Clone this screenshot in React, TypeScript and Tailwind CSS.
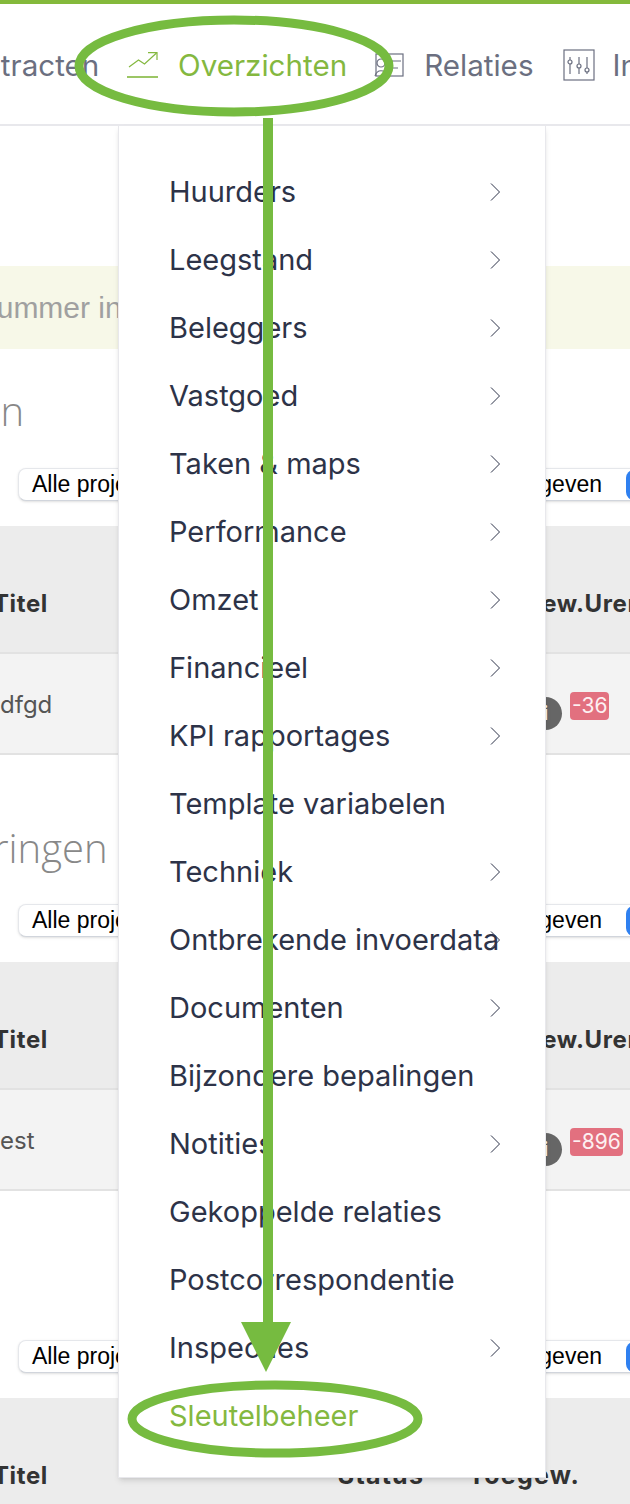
const menuItems = [
  { label: "Huurders", sub: true },
  { label: "Leegstand", sub: true },
  { label: "Beleggers", sub: true },
  { label: "Vastgoed", sub: true },
  { label: "Taken & maps", sub: true },
  { label: "Performance", sub: true },
  { label: "Omzet", sub: true },
  { label: "Financieel", sub: true },
  { label: "KPI rapportages", sub: true },
  { label: "Template variabelen", sub: false },
  { label: "Techniek", sub: true },
  { label: "Ontbrekende invoerdata", sub: true },
  { label: "Documenten", sub: true },
  { label: "Bijzondere bepalingen", sub: false },
  { label: "Notities", sub: true },
  { label: "Gekoppelde relaties", sub: false },
  { label: "Postcorrespondentie", sub: false },
  { label: "Inspecties", sub: true },
];

const FilterRow = () => (
  <div className="h-[33px] flex items-center justify-between pl-[18px] font-['Liberation_Sans',sans-serif] text-[23px] text-black">
    <div className="h-[33px] w-[300px] shrink-0 flex items-center pl-[13px] bg-white rounded-l-lg border border-gray-200 border-b-gray-300 shadow-sm">
      Alle projecten
    </div>
    <div className="h-[33px] flex items-center gap-[24px] -mr-[56px] border-y border-gray-200 border-b-gray-300 shadow-sm">
      <span>Toegegeven</span>
      <span className="w-[60px] h-[30px] shrink-0 rounded-lg bg-[#2f80f0]" />
    </div>
  </div>
);

const TableHeader = ({ full = true }: { full?: boolean }) => (
  <div className="h-[126px] pt-[30px] bg-[#ececec] flex items-center justify-between font-['Inter',sans-serif] font-bold text-[24px] text-[#333] tracking-wide">
    <span className="-ml-[7px]">Titel</span>
    {full ? (
      <span className="-mr-[13px] whitespace-nowrap">Toegew.Uren</span>
    ) : (
      <span className="flex gap-[44px] mr-[50px] text-[25px] tracking-wider">
        <span>Status</span>
        <span>Toegew.</span>
      </span>
    )}
  </div>
);

const TableRow = ({ title, hours }: { title: string; hours: string }) => (
  <div className="h-[103px] bg-[#f3f3f3] border-t-2 border-b-2 border-[#e2e2e2] flex items-center justify-between font-['Inter',sans-serif] text-[24px] text-[#555]">
    <span className="pt-[3px]">{title}</span>
    <div className="w-[101px] shrink-0 flex items-start gap-[8px] pt-[14px]">
      <span className="w-[33px] h-[33px] shrink-0 mt-[5px] rounded-full bg-[#666] text-white font-bold text-[20px] flex items-center justify-center">
        i
      </span>
      <span className="h-[28px] px-[2px] rounded bg-[#e2707f] text-[#fdf0f2] text-[21px] leading-[28px]">
        {hours}
      </span>
    </div>
  </div>
);

const Chevron = () => (
  <svg className="absolute left-[321px] top-[25px]" width="10" height="18" viewBox="0 0 10 18" fill="none" stroke="#2d3348" strokeWidth="1">
    <path d="M1 0.5 L9.5 9 L1 17.5" />
  </svg>
);

const Annotations = () => (
  <svg className="absolute inset-0 pointer-events-none" width="630" height="1504" viewBox="0 0 630 1504" fill="none">
    <ellipse cx="234" cy="66" rx="155" ry="46" stroke="#76bb40" strokeWidth="9" />
    <ellipse cx="275" cy="1419" rx="143" ry="34" stroke="#76bb40" strokeWidth="9" />
    <rect x="263" y="118" width="10" height="1210" fill="#76bb40" />
    <polygon points="241,1322 291,1322 266,1372" fill="#76bb40" />
  </svg>
);

export default function App() {
  return (
    <div className="relative w-[630px] h-[1504px] overflow-hidden bg-white font-['Inter',sans-serif]">
      <div className="h-[4px] bg-[#84b93b]" />

      {/* nav */}
      <div className="h-[122px] pt-[2px] border-b-2 border-[#e8e8ec] flex items-center -ml-[56px] text-[29.6px] text-[#6b6f80] whitespace-nowrap">
        <span className="w-[155px] shrink-0 text-right">Contracten</span>
        <svg className="ml-[28px] mr-[20px] shrink-0" width="31" height="26" viewBox="0 0 31 26" fill="none" stroke="#84b83f" strokeWidth="1.2">
          <path d="M2 15 L11.5 8 L17.5 12 L29.5 1" />
          <path d="M21 0.7 H30 V8" />
          <path d="M0 25 H31" strokeWidth="1.6" />
        </svg>
        <span className="text-[#84b83f] shrink-0">Overzichten</span>
        <svg className="ml-[27px] mr-[19px] shrink-0" width="31" height="24" viewBox="0 0 31 24" fill="none" stroke="#6b6f80" strokeWidth="1.2">
          <rect x="2" y="1" width="27" height="22" />
          <circle cx="7" cy="10" r="4" />
          <path d="M1 23 C3 16 11 16 13 23" />
          <path d="M16 8 H27 M16 15 H24" />
        </svg>
        <span className="shrink-0">Relaties</span>
        <svg className="ml-[29px] mr-[18px] shrink-0" width="32" height="32" viewBox="0 0 32 32" fill="none" stroke="#6b6f80" strokeWidth="1.2">
          <rect x="1" y="1" width="30" height="30" />
          <path d="M7 8 V25 M16 8 V25 M24 8 V25" />
          <circle cx="7" cy="13" r="2" fill="#fff" />
          <circle cx="16" cy="17" r="2" fill="#fff" />
          <circle cx="24" cy="21" r="2" fill="#fff" />
        </svg>
        <span className="shrink-0">Instellingen</span>
      </div>

      {/* page behind the menu */}
      <div className="pt-[140px]">
        <div className="h-[83px] bg-[#f7f8e8] flex items-center -ml-[80px] font-['Liberation_Sans',sans-serif] text-[30px] text-[#a0a0a0] whitespace-nowrap">
          Huisnummer invoeren
        </div>

        <h2 className="h-[119px] pt-[4px] flex items-center justify-end w-[24px] font-['Open_Sans',sans-serif] font-light text-[40px] text-[#888] whitespace-nowrap">
          n
        </h2>
        <FilterRow />
        <div className="h-[25px]" />
        <TableHeader />
        <TableRow title="dfgd" hours="-36" />

        <h2 className="h-[149px] flex items-end pb-[26px] -ml-[7px] font-['Open_Sans',sans-serif] font-light text-[40px] text-[#888] whitespace-nowrap">
          ringen
        </h2>
        <FilterRow />
        <div className="h-[25px]" />
        <TableHeader />
        <TableRow title="est" hours="-896" />

        <div className="h-[149px]" />
        <FilterRow />
        <div className="h-[25px]" />
        <TableHeader full={false} />
      </div>

      {/* dropdown menu */}
      <div className="absolute left-[118px] top-[125px] w-[428px] h-[1353px] pt-[32px] pl-[50px] bg-white border border-[#e8e8ec] shadow-md text-[29px] text-[#2d3348]">
        {menuItems.map((item) => (
          <div key={item.label} className="relative h-[68px] flex items-center whitespace-nowrap">
            {item.label}
            {item.sub && <Chevron />}
          </div>
        ))}
        <div className="h-[68px] flex items-center text-[#84b83f]">Sleutelbeheer</div>
      </div>

      <Annotations />
    </div>
  );
}
